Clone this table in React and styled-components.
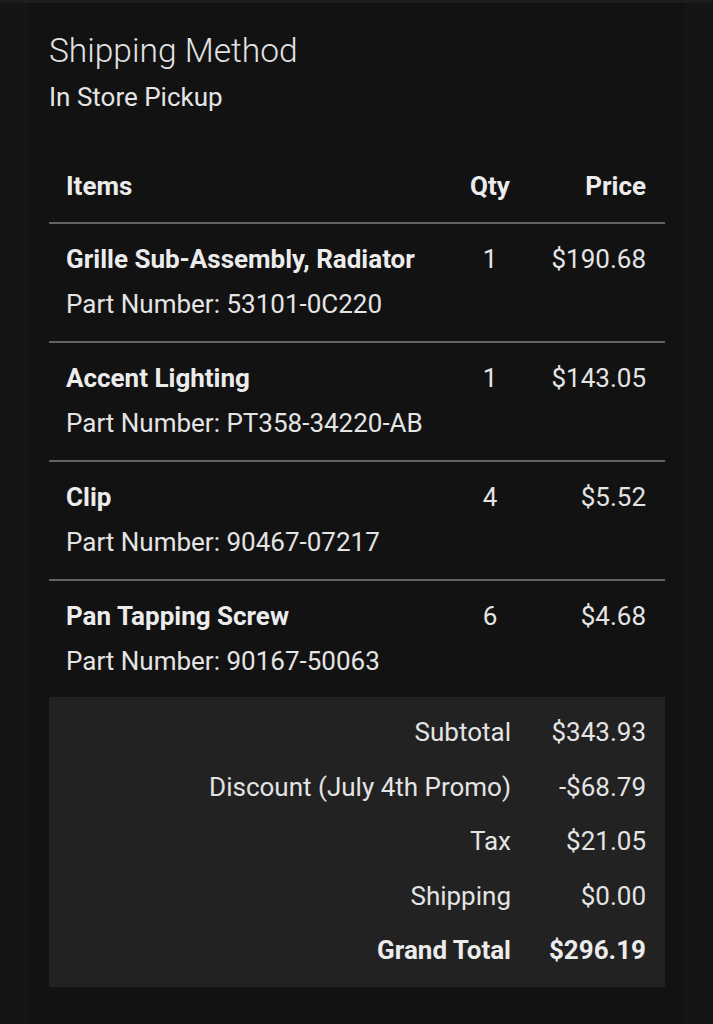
import React from "react";
import styled, { createGlobalStyle } from "styled-components";

const GlobalStyle = createGlobalStyle`
  html, body {
    margin: 0;
    padding: 0;
    background: #151515;
  }
  * {
    box-sizing: border-box;
  }
`;

const Page = styled.div`
  width: 713px;
  min-height: 1024px;
  background: #151515;
  border-top: 3px solid #1d1d1d;
  font-family: Roboto, "Noto Sans", sans-serif;
  color: #e4e4e4;
`;

const Panel = styled.div`
  margin: 0 28px;
  min-height: 1021px;
  background: #121212;
  padding: 25px 20px 0 21px;
`;

const Heading = styled.h2`
  margin: 0;
  font-size: 33.5px;
  font-weight: 300;
  line-height: 46px;
  color: #e2e2e2;
`;

const SubHeading = styled.div`
  font-size: 26px;
  line-height: 46px;
  color: #e4e4e4;
`;

const Table = styled.div`
  margin-top: 44px;
`;

const Row = styled.div`
  display: grid;
  grid-template-columns: 1fr 80px 116px;
  padding: ${(p) =>
    p.$head ? "0 19px 13px 17px" : p.$last ? "13px 19px 13px 17px" : "13px 19px 14px 17px"};
  border-bottom: ${(p) => (p.$last ? "none" : "2px solid #626262")};
  font-size: 26px;
  line-height: 45px;
`;

const Cell = styled.div`
  text-align: ${(p) => p.$align || "left"};
  font-weight: ${(p) => (p.$bold ? 700 : 400)};
  color: ${(p) => (p.$bold ? "#ececec" : "#e4e4e4")};
  white-space: nowrap;
`;

const ItemName = styled.div`
  font-weight: 700;
  color: #ececec;
  white-space: nowrap;
`;

const PartNumber = styled.div`
  color: #e4e4e4;
  white-space: nowrap;
`;

const Summary = styled.div`
  display: grid;
  grid-template-columns: 1fr 135px;
  background: #222222;
  padding: 8px 19px 9px 17px;
  font-size: 26px;
  line-height: 54.5px;
`;

const SummaryCell = styled.div`
  text-align: right;
  font-weight: ${(p) => (p.$bold ? 700 : 400)};
  color: ${(p) => (p.$bold ? "#ececec" : "#e4e4e4")};
  white-space: nowrap;
`;

const items = [
  { name: "Grille Sub-Assembly, Radiator", part: "53101-0C220", qty: 1, price: "$190.68" },
  { name: "Accent Lighting", part: "PT358-34220-AB", qty: 1, price: "$143.05" },
  { name: "Clip", part: "90467-07217", qty: 4, price: "$5.52" },
  { name: "Pan Tapping Screw", part: "90167-50063", qty: 6, price: "$4.68" },
];

const totals = [
  { label: "Subtotal", value: "$343.93" },
  { label: "Discount (July 4th Promo)", value: "-$68.79" },
  { label: "Tax", value: "$21.05" },
  { label: "Shipping", value: "$0.00" },
  { label: "Grand Total", value: "$296.19", bold: true },
];

const App = () => {
  return (
    <Page>
      <GlobalStyle />
      <Panel>
        <Heading>Shipping Method</Heading>
        <SubHeading>In Store Pickup</SubHeading>
        <Table>
          <Row $head>
            <Cell $bold>Items</Cell>
            <Cell $bold $align="center">Qty</Cell>
            <Cell $bold $align="right">Price</Cell>
          </Row>
          {items.map((item, idx) => (
            <Row key={item.part} $last={idx === items.length - 1}>
              <div>
                <ItemName>{item.name}</ItemName>
                <PartNumber>Part Number: {item.part}</PartNumber>
              </div>
              <Cell $align="center">{item.qty}</Cell>
              <Cell $align="right">{item.price}</Cell>
            </Row>
          ))}
          <Summary>
            {totals.map((t) => (
              <React.Fragment key={t.label}>
                <SummaryCell $bold={t.bold}>{t.label}</SummaryCell>
                <SummaryCell $bold={t.bold}>{t.value}</SummaryCell>
              </React.Fragment>
            ))}
          </Summary>
        </Table>
      </Panel>
    </Page>
  );
};

export default App;
